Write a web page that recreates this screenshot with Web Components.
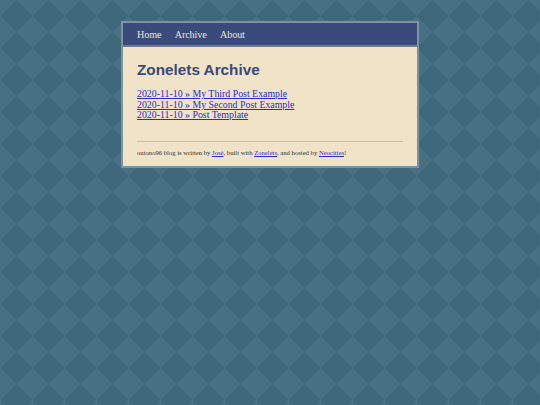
<!DOCTYPE html>
<html><head><meta charset="utf-8"><style>
html,body{margin:0;height:100%}
body{background-color:#3f677a;background-image:linear-gradient(45deg,#487084 25%,transparent 25%),linear-gradient(-45deg,#487084 25%,transparent 25%),linear-gradient(135deg,#487084 25%,transparent 25%),linear-gradient(-135deg,#487084 25%,transparent 25%);background-size:32px 32px;display:flow-root}
</style></head><body>
<site-card>
<site-nav slot="nav"><a href="#">Home</a><a href="#">Archive</a><a href="#">About</a></site-nav>
<h1 slot="title">Zonelets Archive</h1>
<post-link>2020-11-10 » My Third Post Example</post-link>
<post-link>2020-11-10 » My Second Post Example</post-link>
<post-link>2020-11-10 » Post Template</post-link>
<site-footer>outono96 blog is written by <a href="#">José</a>, built with <a href="#">Zonelets</a>, and hosted by <a href="#">Neocities</a>!</site-footer>
</site-card>
<script>
function def(name,html){customElements.define(name,class extends HTMLElement{constructor(){super();this.attachShadow({mode:'open'}).innerHTML=html}})}
def('site-card',`<style>
:host{display:block;box-sizing:border-box;width:298px;height:147px;margin:21px 0 0 121px;border:2px solid #80939d;background:#f1e3c8;color:#333;font-family:"Liberation Serif",serif}
main{padding:12.5px 14px 0 14px}
::slotted(h1){margin:0 0 9.5px;font:bold 15.3px/20px "Liberation Sans",sans-serif;color:#3a4a78}
</style><slot name="nav"></slot><main><slot name="title"></slot><slot></slot></main>`);
def('site-nav',`<style>
:host{display:flex;gap:13.5px;box-sizing:border-box;height:24px;padding:0 14px;align-items:center;background:#3b4a7c;border-bottom:2px solid #707c88;font:10.1px "Liberation Serif",serif;letter-spacing:-.1px}
::slotted(a){color:#f1e3c8;text-decoration:none}
</style><slot></slot>`);
def('post-link',`<style>
:host{display:block;font:9.85px/10.6px "Liberation Serif",serif;color:#2b2bd6;text-decoration:underline;cursor:pointer}
</style><slot></slot>`);
def('site-footer',`<style>
:host{display:block;margin:20px 0 0;border-top:1px solid #c9bda5;padding-top:6px;font:6.65px/9px "Liberation Serif",serif;color:#333}
::slotted(a){color:#2b2bd6}
</style><slot></slot>`);
</script></body></html>
